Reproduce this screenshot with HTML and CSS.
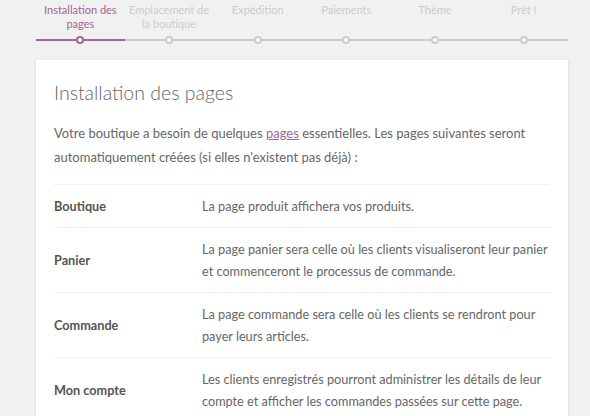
FILE: index.html
```html
<!DOCTYPE html>
<html lang="fr">
<head>
  <meta charset="UTF-8" />
  <title>Installation des pages</title>
  <link rel="stylesheet" href="styles.css">
</head>
<body>
  <div class="wrap">
    <!-- Steps -->
    <ol class="steps">
      <li class="active"><span class="label">Installation des pages</span><span class="track"><i></i></span></li>
      <li><span class="label">Emplacement de la boutique</span><span class="track"><i></i></span></li>
      <li><span class="label">Expédition</span><span class="track"><i></i></span></li>
      <li><span class="label">Paiements</span><span class="track"><i></i></span></li>
      <li><span class="label">Thème</span><span class="track"><i></i></span></li>
      <li><span class="label">Prêt !</span><span class="track"><i></i></span></li>
    </ol>

    <!-- Content -->
    <div class="card">
      <h1>Installation des pages</h1>
      <p>Votre boutique a besoin de quelques <a href="#">pages</a> essentielles. Les pages suivantes seront automatiquement créées (si elles n'existent pas déjà) :</p>
      <table class="pages">
        <tr>
          <th>Boutique</th>
          <td>La page produit affichera vos produits.</td>
        </tr>
        <tr>
          <th>Panier</th>
          <td>La page panier sera celle où les clients visualiseront leur panier et commenceront le processus de commande.</td>
        </tr>
        <tr>
          <th>Commande</th>
          <td>La page commande sera celle où les clients se rendront pour payer leurs articles.</td>
        </tr>
        <tr>
          <th>Mon compte</th>
          <td>Les clients enregistrés pourront administrer les détails de leur compte et afficher les commandes passées sur cette page.</td>
        </tr>
      </table>
    </div>
  </div>
</body>
</html>
```

FILE: styles.css
```css
* { box-sizing: border-box; }
body {
  margin: 0;
  background: #f1f1f1;
  font-family: 'Lato', sans-serif;
  color: #666;
}
.wrap {
  margin-left: 36px;
  width: 532px;
}
.steps {
  list-style: none;
  margin: 0;
  padding: 0;
  display: flex;
}
.steps li {
  flex: 1;
  display: flex;
  flex-direction: column;
  align-items: center;
}
.steps .label {
  height: 35px;
  padding: 3px 2px 0;
  font-size: 11px;
  line-height: 14px;
  text-align: center;
  color: #ccc;
}
.steps .track {
  position: relative;
  width: 100%;
  height: 10px;
}
.steps .track::before {
  content: "";
  position: absolute;
  left: 0;
  right: 0;
  top: 4px;
  height: 2px;
  background: #ccc;
}
.steps .track i {
  position: absolute;
  left: 50%;
  top: 1px;
  width: 8px;
  height: 8px;
  margin-left: -4px;
  border: 2px solid #ccc;
  border-radius: 50%;
  background: #fff;
}
.steps li.active .label { color: #a46497; }
.steps li.active .track::before { background: #a46497; }
.steps li.active .track i { border-color: #a46497; }

.card {
  margin-top: 15px;
  background: #fff;
  padding: 18px 18px 20px;
  box-shadow: 0 1px 3px rgba(0,0,0,0.13);
}
h1 {
  margin: 0;
  font-size: 19.5px;
  font-weight: 300;
  line-height: 30px;
  color: #666;
}
p {
  margin: 13px 0 15px;
  font-size: 13px;
  line-height: 24px;
}
a { color: #a46497; }
.pages {
  width: 100%;
  border-collapse: collapse;
  font-size: 12.7px;
  line-height: 22px;
}
.pages th, .pages td {
  border-top: 1px solid #eee;
  padding: 10px 0;
  text-align: left;
  vertical-align: middle;
}
.pages th {
  width: 148px;
  font-weight: bold;
  color: #555;
}
```
